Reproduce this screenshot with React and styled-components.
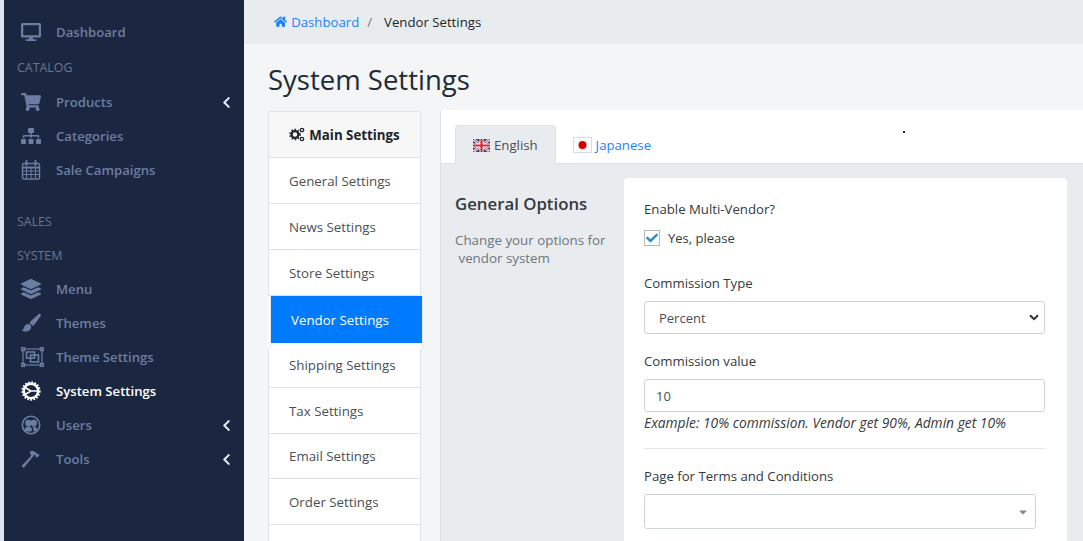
import React from 'react';
import styled, { createGlobalStyle } from 'styled-components';
import {
  FaDesktop,
  FaShoppingCart,
  FaSitemap,
  FaLayerGroup,
  FaHome,
  FaChevronLeft,
  FaCheck,
  FaCaretDown,
} from 'react-icons/fa';

const GlobalStyle = createGlobalStyle`
  html, body {
    margin: 0;
    height: 541px;
    overflow: hidden;
    background: #f4f5f7;
    font-family: "Open Sans", "Noto Sans", sans-serif;
    font-size: 13.5px;
    color: #212529;
  }
  * { box-sizing: border-box; }
`;

const Page = styled.div`
  display: flex;
  height: 541px;
  width: 1083px;
  overflow: hidden;
  border-left: 4px solid #dde4f0;
`;

const Sidebar = styled.nav`
  width: 240px;
  flex: none;
  background: #1b2740;
  padding-top: 15px;
`;

const NavRow = styled.div`
  display: flex;
  align-items: center;
  height: 34px;
  padding: 0 11px 0 17px;
  color: ${p => (p.$active ? '#fff' : '#6c7da3')};
  font-weight: 600;
  font-size: 13.15px;
`;

const NavIcon = styled.span`
  width: 35px;
  display: flex;
  justify-content: flex-start;
  font-size: 20px;
  line-height: 0;
`;

const NavLabel = styled.span`
  flex: 1;
`;

const Chevron = styled(FaChevronLeft)`
  color: #e6eaf2;
  font-size: 13px;
`;

const GroupLabel = styled.div`
  display: flex;
  align-items: center;
  height: ${p => (p.$tall ? '36px' : '34px')};
  margin-top: ${p => (p.$spaced ? '17px' : '0')};
  padding-left: 13px;
  color: #687694;
  font-size: 12.4px;
  text-transform: uppercase;
`;

const Main = styled.main`
  flex: 1;
  min-width: 0;
`;

const Breadcrumb = styled.div`
  display: flex;
  align-items: center;
  height: 44px;
  padding-left: 30px;
  background: #e9ecef;
  font-size: 13.2px;
`;

const Crumb = styled.a`
  display: flex;
  align-items: center;
  gap: 4px;
  color: #1f80ff;
`;

const Slash = styled.span`
  margin: 0 12px 0 8px;
  color: #6c757d;
`;

const Title = styled.h1`
  margin: 18px 0 13px 24px;
  font-size: 27.5px;
  line-height: 36px;
  font-weight: 500;
  color: #212b36;
`;

const Columns = styled.div`
  display: flex;
  align-items: flex-start;
  padding-left: 24px;
  gap: 19px;
`;

const SettingsNav = styled.div`
  width: 153px;
  flex: none;
  background: #fff;
  border: 1px solid #dfe1e4;
  border-radius: 3px 3px 0 0;
  border-bottom: none;
`;

const SettingsHead = styled.div`
  display: flex;
  align-items: center;
  justify-content: center;
  gap: 4px;
  height: 46px;
  background: #f7f7f7;
  border-bottom: 1px solid #dfe1e4;
  font-weight: 700;
  font-size: 13.3px;
  color: #212529;
`;

const SettingsItem = styled.div`
  display: flex;
  align-items: center;
  height: ${p => p.$h || 46}px;
  padding: 0 0 ${p => p.$pb || 0}px 20px;
  font-size: 13.3px;
  color: #495057;
  border-bottom: 1px solid #dfe1e4;
`;

const ActiveWrap = styled.div`
  margin: 0 -3px 0 -1px;
  padding-left: 2px;
  background: #fff;
`;

const ActiveFrame = styled.div`
  padding-bottom: 6px;
  border-left: 1px solid #e6e8ea;
  border-right: 1px solid #e6e8ea;
`;

const SettingsActive = styled.div`
  display: flex;
  align-items: center;
  height: 47px;
  padding-left: 20px;
  background: #007bff;
  color: #fff;
  font-size: 13.3px;
`;

const Panel = styled.section`
  flex: 1;
  min-width: 0;
  background: #fff;
  border-left: 1px solid #dfe1e4;
  margin-top: -1px;
  height: 600px;
  position: relative;
`;

const Tabs = styled.div`
  display: flex;
  height: 54px;
  padding: 15px 0 0 14px;
  border-bottom: 1px solid #dee2e6;
`;

const Tab = styled.div`
  display: flex;
  align-items: center;
  gap: 4px;
  height: 39px;
  padding: 0 ${p => (p.$active ? '17px' : '16px')};
  font-size: 13.2px;
  color: ${p => (p.$active ? '#495057' : '#1f80ff')};
  background: ${p => (p.$active ? '#e9ecef' : 'transparent')};
  border: 1px solid ${p => (p.$active ? '#dee2e6' : 'transparent')};
  border-bottom: none;
  border-radius: 4px 4px 0 0;
`;

const Speck = styled.span`
  position: absolute;
  left: 462px;
  top: 21px;
  width: 2px;
  height: 2px;
  background: #222;
`;

const TabBody = styled.div`
  display: flex;
  align-items: flex-start;
  height: 100%;
  padding: 14px 16px 0 14px;
  background: #e9ecef;
`;

const Intro = styled.div`
  width: 169px;
  flex: none;
  padding-top: 14px;
`;

const IntroTitle = styled.h2`
  margin: 0 0 15px;
  font-size: 16.8px;
  line-height: 24px;
  font-weight: 600;
  color: #343a40;
`;

const IntroText = styled.p`
  margin: 0;
  font-size: 13.35px;
  line-height: 18px;
  color: #6c757d;
`;

const FormCard = styled.div`
  flex: 1;
  background: #fff;
  border-radius: 4px;
  padding: 21px 22px 0 20px;
  height: 500px;
`;

const Label = styled.div`
  font-size: 13.2px;
  line-height: 20px;
  color: #343a40;
`;

const CheckRow = styled.div`
  display: flex;
  align-items: center;
  gap: 8px;
  margin: 9px 0 25px;
  font-size: 13px;
  line-height: 20px;
  color: #343a40;
`;

const CheckBox = styled.span`
  display: flex;
  align-items: center;
  justify-content: center;
  width: 16px;
  height: 16px;
  border: 1px solid #b5b8bc;
  color: #2a8fd0;
  font-size: 12px;
`;

const Control = styled.div`
  display: flex;
  align-items: center;
  justify-content: space-between;
  height: ${p => p.$h || 33}px;
  width: ${p => p.$w || 401}px;
  margin-top: 8px;
  padding-left: ${p => p.$pl || 14}px;
  padding-right: ${p => p.$pr || 5}px;
  border: 1px solid #ced4da;
  border-radius: 3px;
  background: #fff;
  font-size: 13px;
  color: #495057;
`;

const ControlGap = styled.div`
  height: ${p => p.$h}px;
`;

const Hint = styled.div`
  margin-top: 1px;
  font-size: 13.8px;
  line-height: 20px;
  font-style: italic;
  color: #343a40;
`;

const Divider = styled.hr`
  width: 401px;
  margin: 15px 0 17px;
  border: 0;
  border-top: 1px solid #e4e6e9;
`;

const Arrow = () => (
  <svg width="10" height="7" viewBox="0 0 10 7">
    <path d="M1 1.2 5 5.2 9 1.2" fill="none" stroke="#2d3238" strokeWidth="2" />
  </svg>
);

const UkFlag = () => (
  <svg width="17" height="13" viewBox="0 0 17 13">
    <rect width="17" height="13" fill="#2b3f86" />
    <path d="M0 0 17 13M17 0 0 13" stroke="#fff" strokeWidth="2.6" />
    <path d="M0 0 17 13M17 0 0 13" stroke="#cf2a3c" strokeWidth="1" />
    <path d="M8.5 0V13M0 6.5H17" stroke="#fff" strokeWidth="4" />
    <path d="M8.5 0V13M0 6.5H17" stroke="#cf2a3c" strokeWidth="2.2" />
  </svg>
);

const JapanFlag = () => (
  <svg width="19" height="16" viewBox="0 0 19 16">
    <rect x="0.5" y="0.5" width="18" height="15" fill="#fff" stroke="#dcdcdc" />
    <circle cx="9.5" cy="8" r="4" fill="#d60000" />
  </svg>
);

const CalendarIcon = () => (
  <svg width="20" height="20" viewBox="0 0 20 20" fill="none" stroke="currentColor">
    <rect x="1.5" y="3.5" width="17" height="15.5" rx="1.5" strokeWidth="1.4" />
    <path d="M1.5 7.5H18.5" strokeWidth="2" />
    <path d="M5.5 8V18M10 8V18M14.5 8V18M2 11H18M2 14.5H18" strokeWidth="1" />
    <path d="M5.5 1V5M14.5 1V5" strokeWidth="2" strokeLinecap="round" />
  </svg>
);

const BrushIcon = () => (
  <svg width="20" height="20" viewBox="0 0 20 20" fill="currentColor">
    <path d="M19.4 1c.6.5.6 1.2.2 2L13.6 11.5c-.6.9-1.3 1.3-2.1 1.3L8.7 10.2c.1-1 .5-1.7 1.2-2.3L17.5 1.2c.7-.5 1.3-.6 1.9-.2Z" />
    <path d="M7.2 11c1.5 0 3 1.3 3 3 0 3.2-3 4.6-6 4.6-1.5 0-3-.6-3.7-1.5 1.5-.3 2.2-1 2.6-2.6.4-2 2.2-3.5 4.1-3.5Z" />
  </svg>
);

const FrameIcon = () => (
  <svg width="23" height="20" viewBox="0 0 23 20" fill="none" stroke="currentColor" strokeWidth="1.2">
    <rect x="2" y="2" width="19" height="16" />
    <rect x="0.6" y="0.6" width="3" height="3" />
    <rect x="19.4" y="0.6" width="3" height="3" />
    <rect x="0.6" y="16.4" width="3" height="3" />
    <rect x="19.4" y="16.4" width="3" height="3" />
    <rect x="5.5" y="5" width="8" height="6" strokeWidth="1.6" />
    <rect x="9.5" y="8" width="8" height="7" strokeWidth="1.6" />
  </svg>
);

const WheelIcon = () => (
  <svg width="20" height="20" viewBox="0 0 20 20" fill="none" stroke="currentColor">
    <circle cx="10" cy="10" r="7.2" strokeWidth="2.4" />
    <circle cx="10" cy="10" r="8.8" strokeWidth="1.8" strokeDasharray="1.6 1.6" />
    <path d="M10 10 4 6.5M10 10 4 13.5M10 10H17" strokeWidth="1.6" />
  </svg>
);

const UsersIcon = () => (
  <svg width="20" height="20" viewBox="0 0 20 20" fill="currentColor">
    <path
      fillRule="evenodd"
      d="M10 .5a9.5 9.5 0 1 0 0 19 9.5 9.5 0 0 0 0-19Zm0 1.6a7.9 7.9 0 1 1 0 15.8 7.9 7.9 0 0 1 0-15.8Z"
    />
    <circle cx="7.4" cy="8" r="3.2" />
    <circle cx="12.8" cy="8" r="3.2" />
    <path d="M3.6 15c.6-2.6 2-3.8 3.8-3.8s3.2 1.2 3.8 3.8l-1 1.6H5Z" />
    <path d="M12 11.2c1.8-.2 3.6.8 4.3 3l-2 2.4h-1.8c.2-2.2-.1-3.8-1-4.8Z" />
  </svg>
);

const HammerIcon = () => (
  <svg width="20" height="20" viewBox="0 0 20 20" fill="currentColor">
    <path d="M9 2.5c2.2-.8 4.6-.4 6.2 1.2l1.2 1.2.8-.2 1.3 1.4-2.6 2.7-1.3-1.3.1-.9-1.2-.9L2.6 19 .6 17 10.4 6.6 9 4.8Z" />
  </svg>
);

const GearsIcon = () => (
  <svg width="16" height="15" viewBox="0 0 16 15" fill="none" stroke="currentColor">
    <circle cx="6" cy="7.5" r="3.4" strokeWidth="2.2" />
    <circle cx="6" cy="7.5" r="5" strokeWidth="1.6" strokeDasharray="1.6 1.6" />
    <circle cx="13" cy="3" r="1.7" strokeWidth="1.3" />
    <circle cx="13" cy="12" r="1.7" strokeWidth="1.3" />
  </svg>
);

const topItems = [
  { label: 'Products', icon: <FaShoppingCart />, more: true },
  { label: 'Categories', icon: <FaSitemap /> },
  { label: 'Sale Campaigns', icon: <CalendarIcon /> },
];

const systemItems = [
  { label: 'Menu', icon: <FaLayerGroup /> },
  { label: 'Themes', icon: <BrushIcon /> },
  { label: 'Theme Settings', icon: <FrameIcon /> },
  { label: 'System Settings', icon: <WheelIcon />, active: true },
  { label: 'Users', icon: <UsersIcon />, more: true },
  { label: 'Tools', icon: <HammerIcon />, more: true },
];

const MenuRow = ({ item }) => (
  <NavRow $active={item.active}>
    <NavIcon>{item.icon}</NavIcon>
    <NavLabel>{item.label}</NavLabel>
    {item.more && <Chevron />}
  </NavRow>
);

const App = () => (
  <>
    <GlobalStyle />
    <Page>
      <Sidebar>
        <MenuRow item={{ label: 'Dashboard', icon: <FaDesktop /> }} />
        <GroupLabel $tall>Catalog</GroupLabel>
        {topItems.map(item => (
          <MenuRow key={item.label} item={item} />
        ))}
        <GroupLabel $spaced>Sales</GroupLabel>
        <GroupLabel>System</GroupLabel>
        {systemItems.map(item => (
          <MenuRow key={item.label} item={item} />
        ))}
      </Sidebar>
      <Main>
        <Breadcrumb>
          <Crumb>
            <FaHome />
            Dashboard
          </Crumb>
          <Slash>/</Slash>
          <span>Vendor Settings</span>
        </Breadcrumb>
        <Title>System Settings</Title>
        <Columns>
          <SettingsNav>
            <SettingsHead>
              <GearsIcon />
              Main Settings
            </SettingsHead>
            <SettingsItem>General Settings</SettingsItem>
            <SettingsItem>News Settings</SettingsItem>
            <SettingsItem>Store Settings</SettingsItem>
            <ActiveWrap>
              <ActiveFrame>
                <SettingsActive>Vendor Settings</SettingsActive>
              </ActiveFrame>
            </ActiveWrap>
            <SettingsItem $h={39} $pb={7}>Shipping Settings</SettingsItem>
            <SettingsItem>Tax Settings</SettingsItem>
            <SettingsItem $h={45}>Email Settings</SettingsItem>
            <SettingsItem>Order Settings</SettingsItem>
            <SettingsItem />
          </SettingsNav>
          <Panel>
            <Speck />
            <Tabs>
              <Tab $active>
                <UkFlag />
                English
              </Tab>
              <Tab>
                <JapanFlag />
                Japanese
              </Tab>
            </Tabs>
            <TabBody>
              <Intro>
                <IntroTitle>General Options</IntroTitle>
                <IntroText>
                  Change your options for
                  <br />
                  &nbsp;vendor system
                </IntroText>
              </Intro>
              <FormCard>
                <Label>Enable Multi-Vendor?</Label>
                <CheckRow>
                  <CheckBox>
                    <FaCheck />
                  </CheckBox>
                  Yes, please
                </CheckRow>
                <Label>Commission Type</Label>
                <Control $pl={14}>
                  Percent
                  <Arrow />
                </Control>
                <ControlGap $h={17} />
                <Label>Commission value</Label>
                <Control $pl={11}>10</Control>
                <Hint>Example: 10% commission. Vendor get 90%, Admin get 10%</Hint>
                <Divider />
                <Label>Page for Terms and Conditions</Label>
                <Control $w={392} $h={35} $pr={6}>
                  <span />
                  <FaCaretDown color="#888" size={12} />
                </Control>
              </FormCard>
            </TabBody>
          </Panel>
        </Columns>
      </Main>
    </Page>
  </>
);

export default App;
